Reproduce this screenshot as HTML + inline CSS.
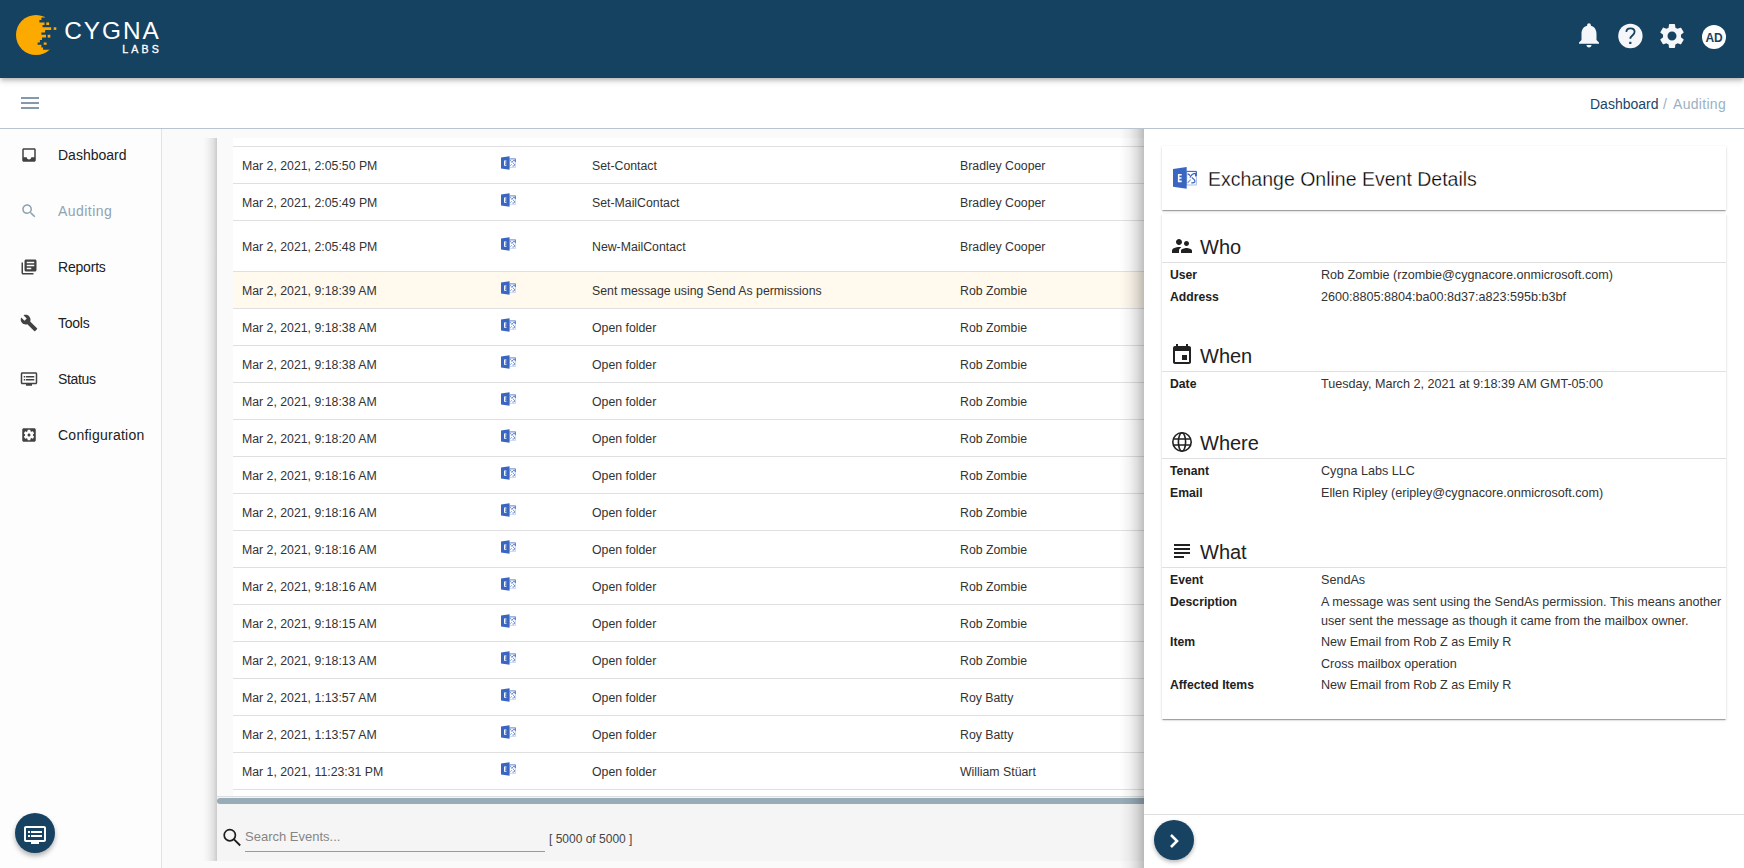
<!DOCTYPE html>
<html><head><meta charset="utf-8"><style>
*{box-sizing:border-box}
html,body{margin:0;padding:0;width:1744px;height:868px;overflow:hidden;background:#fff;font-family:"Liberation Sans",sans-serif;position:relative}
.abs{position:absolute}
#hdr{position:absolute;left:0;top:0;width:1744px;height:78px;background:#164261;box-shadow:0 2px 4px -1px rgba(0,0,0,.22),0 4px 5px 0 rgba(0,0,0,.1),0 1px 10px 0 rgba(0,0,0,.07);z-index:5}
#sub{position:absolute;left:0;top:78px;width:1744px;height:51px;background:#fff;border-bottom:1px solid #b8c5cf;z-index:4}
#side{position:absolute;left:0;top:129px;width:162px;height:739px;background:#fdfdfd;border-right:1px solid #e2e2e2}
#main{position:absolute;left:162px;top:129px;width:982px;height:739px;background:#fafafa;overflow:hidden}
.nav{position:absolute;left:58px;font-size:14px;line-height:18px;white-space:nowrap}
#tbl{position:absolute;left:217px;top:138px;width:1000px;height:723px;background:#fafafa}
#tsh{position:absolute;left:203px;top:138px;width:14px;height:723px;background:linear-gradient(to right,rgba(0,0,0,0),rgba(0,0,0,.03) 35%,rgba(0,0,0,.1) 75%,rgba(0,0,0,.19))}
.row{position:absolute;left:233px;width:1000px;border-top:1px solid #e0e0e0}
.cell{position:absolute;font-size:12.3px;line-height:16px;color:#333;white-space:nowrap}
#panel{position:absolute;left:1144px;top:129px;width:600px;height:739px;background:#fff;z-index:3}
#psh{position:absolute;left:1120px;top:129px;width:24px;height:739px;z-index:3;background:linear-gradient(to right,rgba(0,0,0,0),rgba(0,0,0,.05) 40%,rgba(0,0,0,.13) 70%,rgba(0,0,0,.25))}
.card{position:absolute;left:1162px;width:564px;background:#fff;box-shadow:0 2px 1px -1px rgba(0,0,0,.2),0 1px 1px 0 rgba(0,0,0,.14),0 1px 3px 0 rgba(0,0,0,.12)}
.title{position:absolute;font-size:19.5px;line-height:26px;color:#000;white-space:nowrap;-webkit-text-stroke:.3px #fff}
.hline{position:absolute;left:1162px;width:564px;height:1px;background:#e0e0e0}
.sec{position:absolute;left:1200px;font-size:20px;line-height:24px;color:#212121}
.dl{position:absolute;left:1170px;font-size:12.2px;line-height:22px;padding-top:1px;font-weight:bold;color:#212121;white-space:nowrap}
.dv{position:absolute;left:1321px;font-size:12.6px;line-height:22px;padding-top:1px;color:#333}
</style></head><body>
<div id="hdr"><svg width="150" height="70" viewBox="0 0 150 70" style="position:absolute;left:0;top:0">
<defs><clipPath id="cl"><path d="M0 0H45.1V17.5H41.4V20.1H39.4V22.4H44.5V25H42.5V27.3H51.2V29.9H45.1V32.5H41.4V34.8H46V37.6H42V39.9H39.9V42.5H37.6V44.8H41.4V47.4H43.1V49.7H60V60H0Z"/></clipPath></defs>
<circle cx="36" cy="35" r="20" fill="#fcaa00" clip-path="url(#cl)"/>
<rect x="46.3" y="22.4" width="2.8" height="2.6" fill="#fcaa00"/>
<rect x="53.7" y="27.3" width="2.6" height="2.6" fill="#fcaa00"/>
<rect x="47.7" y="34.8" width="2.6" height="2.8" fill="#fcaa00"/>
<rect x="43.7" y="42.5" width="2.9" height="2.3" fill="#fcaa00"/>
</svg>
<svg width="170" height="60" style="position:absolute;left:0;top:0">
<text x="64.3" y="39.4" font-family="Liberation Sans" font-size="24.4" fill="#fff" textLength="94.5" lengthAdjust="spacing">CYGNA</text>
<text x="122.2" y="53" font-family="Liberation Sans" font-size="10.6" fill="#fff" stroke="#fff" stroke-width=".35" textLength="36.6" lengthAdjust="spacing">LABS</text>
</svg>
<svg width="30" height="30" viewBox="0 0 24 24" style="position:absolute;left:1574px;top:20px"><path d="M12 22c1.1 0 2-.9 2-2h-4c0 1.1.89 2 2 2zm6-6v-5c0-3.07-1.64-5.64-4.5-6.32V4c0-.83-.67-1.5-1.5-1.5s-1.5.67-1.5 1.5v.68C7.63 5.36 6 7.92 6 11v5l-2 2v1h16v-1l-2-2z" fill="#f4f6f9"/></svg>
<svg width="40" height="40" style="position:absolute;left:1610px;top:16px"><circle cx="20.4" cy="20" r="12.2" fill="#f4f6f9"/><path d="M16.3 15.9Q16.6 12.3 20.3 12.3Q24.6 12.3 24.6 15.8Q24.6 17.6 22.6 19.2Q20.3 21 20.3 22.8" fill="none" stroke="#164261" stroke-width="1.8"/><rect x="19.2" y="25.8" width="2.2" height="2.2" fill="#164261"/></svg>
<svg width="30" height="30" viewBox="0 0 24 24" style="position:absolute;left:1657px;top:21px"><path d="M19.14 12.94c.04-.3.06-.61.06-.94 0-.32-.02-.64-.07-.94l2.03-1.58c.18-.14.23-.41.12-.61l-1.92-3.32c-.12-.22-.37-.29-.59-.22l-2.39.96c-.5-.38-1.03-.7-1.62-.94l-.36-2.54c-.04-.24-.24-.41-.48-.41h-3.84c-.24 0-.43.17-.47.41l-.36 2.54c-.59.24-1.13.57-1.62.94l-2.39-.96c-.22-.08-.47 0-.59.22L2.74 8.87c-.12.21-.08.47.12.61l2.03 1.58c-.05.3-.09.63-.09.94s.02.64.07.94l-2.03 1.58c-.18.14-.23.41-.12.61l1.92 3.32c.12.22.37.29.59.22l2.39-.96c.5.38 1.03.7 1.62.94l.36 2.54c.05.24.24.41.48.41h3.84c.24 0 .44-.17.47-.41l.36-2.54c.59-.24 1.13-.56 1.62-.94l2.39.96c.22.08.47 0 .59-.22l1.92-3.32c.12-.22.07-.47-.12-.61l-2.01-1.58zM12 15.6c-1.98 0-3.6-1.62-3.6-3.6s1.62-3.6 3.6-3.6 3.6 1.62 3.6 3.6-1.62 3.6-3.6 3.6z" fill="#f4f6f9"/></svg>
<div class="abs" style="left:1702px;top:25px;width:24px;height:24px;border-radius:50%;background:#fff;color:#174262;font-weight:bold;font-size:12px;line-height:26px;text-align:center;letter-spacing:-.2px">AD</div>
</div>
<div id="sub">
<div class="abs" style="left:21px;top:19px;width:18px;height:2px;background:#8499ab"></div>
<div class="abs" style="left:21px;top:24px;width:18px;height:2px;background:#8499ab"></div>
<div class="abs" style="left:21px;top:29px;width:18px;height:2px;background:#8499ab"></div>
<div class="abs" style="left:1590px;top:17px;font-size:14px;line-height:18px;white-space:nowrap;color:#1b4567">Dashboard</div><div class="abs" style="left:1663px;top:17px;font-size:14px;line-height:18px;color:#9bb0c4">/</div><div class="abs" style="left:1673px;top:17px;font-size:14px;line-height:18px;white-space:nowrap;letter-spacing:.3px;color:#9bb0c4">Auditing</div>
</div>
<div id="side"></div>
<svg width="18" height="18" viewBox="0 0 24 24" style="position:absolute;left:20px;top:146px"><path d="M19 3H4.99c-1.11 0-1.98.89-1.98 2L3 19c0 1.1.88 2 1.99 2H19c1.1 0 2-.9 2-2V5c0-1.11-.9-2-2-2zm0 12h-4c0 1.66-1.35 3-3 3s-3-1.34-3-3H4.99V5H19v10z" fill="#424242"/></svg>
<div class="nav" style="top:146px;color:#212121;letter-spacing:0px">Dashboard</div>
<svg width="18" height="18" viewBox="0 0 24 24" style="position:absolute;left:20px;top:202px"><path d="M15.5 14h-.79l-.28-.27C15.41 12.59 16 11.11 16 9.5 16 5.91 13.09 3 9.5 3S3 5.91 3 9.5 5.91 16 9.5 16c1.61 0 3.09-.59 4.23-1.57l.27.28v.79l5 4.99L20.49 19l-4.99-5zm-6 0C7.01 14 5 11.99 5 9.5S7.01 5 9.5 5 14 7.01 14 9.5 11.99 14 9.5 14z" fill="#8fa3b3"/></svg>
<div class="nav" style="top:202px;color:#8fa3b3;letter-spacing:0.45px">Auditing</div>
<svg width="18" height="18" viewBox="0 0 24 24" style="position:absolute;left:20px;top:258px"><path d="M4 6H2v14c0 1.1.9 2 2 2h14v-2H4V6zm16-4H8c-1.1 0-2 .9-2 2v12c0 1.1.9 2 2 2h12c1.1 0 2-.9 2-2V4c0-1.1-.9-2-2-2zm-1 9H9V9h10v2zm-4 4H9v-2h6v2zm4-8H9V5h10v2z" fill="#424242"/></svg>
<div class="nav" style="top:258px;color:#212121;letter-spacing:-0.2px">Reports</div>
<svg width="18" height="18" viewBox="0 0 24 24" style="position:absolute;left:20px;top:314px"><path d="M22.7 19l-9.1-9.1c.9-2.3.4-5-1.5-6.9-2-2-5-2.4-7.4-1.3L9 6 6 9 1.6 4.7C.4 7.1.9 10.1 2.9 12.1c1.9 1.9 4.6 2.4 6.9 1.5l9.1 9.1c.4.4 1 .4 1.4 0l2.3-2.3c.5-.4.5-1.1.1-1.4z" fill="#424242"/></svg>
<div class="nav" style="top:314px;color:#212121;letter-spacing:-0.25px">Tools</div>
<svg width="18" height="18" viewBox="0 0 24 24" style="position:absolute;left:20px;top:370px"><path d="M21 3H3c-1.1 0-2 .9-2 2v12c0 1.1.9 2 2 2h5v2h8v-2h5c1.1 0 1.99-.9 1.99-2L23 5c0-1.1-.9-2-2-2zm0 14H3V5h18v12zm-2-9H8v2h11V8zm0 4H8v2h11v-2zM7 8H5v2h2V8zm0 4H5v2h2v-2z" fill="#424242"/></svg>
<div class="nav" style="top:370px;color:#212121;letter-spacing:-0.35px">Status</div>
<svg width="18" height="18" viewBox="0 0 24 24" style="position:absolute;left:20px;top:426px"><path d="M12 10c-1.1 0-2 .9-2 2s.9 2 2 2 2-.9 2-2-.9-2-2-2zm7-7H5c-1.11 0-2 .9-2 2v14c0 1.1.89 2 2 2h14c1.11 0 2-.9 2-2V5c0-1.1-.89-2-2-2zm-1.75 9c0 .23-.02.46-.05.68l1.48 1.16c.13.11.17.3.08.45l-1.4 2.42c-.09.15-.27.21-.43.15l-1.74-.7c-.36.28-.76.51-1.18.69l-.26 1.85c-.03.17-.18.3-.35.3h-2.8c-.17 0-.32-.13-.35-.29l-.26-1.85c-.43-.18-.82-.41-1.18-.69l-1.74.7c-.16.06-.34 0-.43-.15l-1.4-2.42c-.09-.15-.05-.34.08-.45l1.48-1.16c-.03-.23-.05-.46-.05-.69 0-.23.02-.46.05-.68l-1.48-1.16c-.13-.11-.17-.3-.08-.45l1.4-2.42c.09-.15.27-.21.43-.15l1.74.7c.36-.28.76-.51 1.18-.69l.26-1.85c.03-.17.18-.3.35-.3h2.8c.17 0 .32.13.35.29l.26 1.85c.43.18.82.41 1.18.69l1.74-.7c.16-.06.34 0 .43.15l1.4 2.42c.09.15.05.34-.08.45l-1.48 1.16c.03.23.05.46.05.69z" fill="#424242"/></svg>
<div class="nav" style="top:426px;color:#212121;letter-spacing:0.25px">Configuration</div>
<div id="main"></div>
<div id="tbl"></div><div id="tsh"></div>
<div class="abs" style="left:233px;top:138px;width:1000px;height:658px;background:#fff"></div>
<div class="row" style="top:146px;height:37px;background:#fff"></div>
<div class="cell" style="left:242px;top:157.5px">Mar 2, 2021, 2:05:50 PM</div>
<svg width="15" height="14" viewBox="0 0 24 22" style="position:absolute;left:501px;top:156px">
<path d="M13.7 4.4H23.4V18H13.7Z" fill="#fff" stroke="#a9bde6" stroke-width="1"/>
<path d="M13.7 4.4H23.4V9" fill="none" stroke="#3a66c2" stroke-width="1"/>
<g fill="none" stroke="#3a66c2" stroke-width="1.2">
<path d="M14.6 6.9Q16.4 7.3 16.9 8.8"/>
<path d="M17 10.6Q18.6 6.4 22.6 6.4V9.6"/>
<path d="M18.8 10.4L21.6 13Q22.9 15.9 19.4 15.9H18.3"/>
<path d="M17.6 12.6L14.6 15.8" stroke="#7f9bd8"/>
</g>
<path d="M0 2.1L13.7 0V21.8L0 19.8Z" fill="#3a66c2"/>
<path d="M4.9 6.9H8.7V8.5H6.4V10.2H8.5V11.7H6.4V13.6H8.7V15.2H4.9Z" fill="#fff"/>
</svg>
<div class="cell" style="left:592px;top:157.5px">Set-Contact</div>
<div class="cell" style="left:960px;top:157.5px">Bradley Cooper</div>
<div class="row" style="top:183px;height:37px;background:#fff"></div>
<div class="cell" style="left:242px;top:194.5px">Mar 2, 2021, 2:05:49 PM</div>
<svg width="15" height="14" viewBox="0 0 24 22" style="position:absolute;left:501px;top:193px">
<path d="M13.7 4.4H23.4V18H13.7Z" fill="#fff" stroke="#a9bde6" stroke-width="1"/>
<path d="M13.7 4.4H23.4V9" fill="none" stroke="#3a66c2" stroke-width="1"/>
<g fill="none" stroke="#3a66c2" stroke-width="1.2">
<path d="M14.6 6.9Q16.4 7.3 16.9 8.8"/>
<path d="M17 10.6Q18.6 6.4 22.6 6.4V9.6"/>
<path d="M18.8 10.4L21.6 13Q22.9 15.9 19.4 15.9H18.3"/>
<path d="M17.6 12.6L14.6 15.8" stroke="#7f9bd8"/>
</g>
<path d="M0 2.1L13.7 0V21.8L0 19.8Z" fill="#3a66c2"/>
<path d="M4.9 6.9H8.7V8.5H6.4V10.2H8.5V11.7H6.4V13.6H8.7V15.2H4.9Z" fill="#fff"/>
</svg>
<div class="cell" style="left:592px;top:194.5px">Set-MailContact</div>
<div class="cell" style="left:960px;top:194.5px">Bradley Cooper</div>
<div class="row" style="top:220px;height:51px;background:#fff"></div>
<div class="cell" style="left:242px;top:238.5px">Mar 2, 2021, 2:05:48 PM</div>
<svg width="15" height="14" viewBox="0 0 24 22" style="position:absolute;left:501px;top:237px">
<path d="M13.7 4.4H23.4V18H13.7Z" fill="#fff" stroke="#a9bde6" stroke-width="1"/>
<path d="M13.7 4.4H23.4V9" fill="none" stroke="#3a66c2" stroke-width="1"/>
<g fill="none" stroke="#3a66c2" stroke-width="1.2">
<path d="M14.6 6.9Q16.4 7.3 16.9 8.8"/>
<path d="M17 10.6Q18.6 6.4 22.6 6.4V9.6"/>
<path d="M18.8 10.4L21.6 13Q22.9 15.9 19.4 15.9H18.3"/>
<path d="M17.6 12.6L14.6 15.8" stroke="#7f9bd8"/>
</g>
<path d="M0 2.1L13.7 0V21.8L0 19.8Z" fill="#3a66c2"/>
<path d="M4.9 6.9H8.7V8.5H6.4V10.2H8.5V11.7H6.4V13.6H8.7V15.2H4.9Z" fill="#fff"/>
</svg>
<div class="cell" style="left:592px;top:238.5px">New-MailContact</div>
<div class="cell" style="left:960px;top:238.5px">Bradley Cooper</div>
<div class="row" style="top:271px;height:37px;background:#fff9ee"></div>
<div class="cell" style="left:242px;top:282.5px">Mar 2, 2021, 9:18:39 AM</div>
<svg width="15" height="14" viewBox="0 0 24 22" style="position:absolute;left:501px;top:281px">
<path d="M13.7 4.4H23.4V18H13.7Z" fill="#fff" stroke="#a9bde6" stroke-width="1"/>
<path d="M13.7 4.4H23.4V9" fill="none" stroke="#3a66c2" stroke-width="1"/>
<g fill="none" stroke="#3a66c2" stroke-width="1.2">
<path d="M14.6 6.9Q16.4 7.3 16.9 8.8"/>
<path d="M17 10.6Q18.6 6.4 22.6 6.4V9.6"/>
<path d="M18.8 10.4L21.6 13Q22.9 15.9 19.4 15.9H18.3"/>
<path d="M17.6 12.6L14.6 15.8" stroke="#7f9bd8"/>
</g>
<path d="M0 2.1L13.7 0V21.8L0 19.8Z" fill="#3a66c2"/>
<path d="M4.9 6.9H8.7V8.5H6.4V10.2H8.5V11.7H6.4V13.6H8.7V15.2H4.9Z" fill="#fff"/>
</svg>
<div class="cell" style="left:592px;top:282.5px">Sent message using Send As permissions</div>
<div class="cell" style="left:960px;top:282.5px">Rob Zombie</div>
<div class="row" style="top:308px;height:37px;background:#fff"></div>
<div class="cell" style="left:242px;top:319.5px">Mar 2, 2021, 9:18:38 AM</div>
<svg width="15" height="14" viewBox="0 0 24 22" style="position:absolute;left:501px;top:318px">
<path d="M13.7 4.4H23.4V18H13.7Z" fill="#fff" stroke="#a9bde6" stroke-width="1"/>
<path d="M13.7 4.4H23.4V9" fill="none" stroke="#3a66c2" stroke-width="1"/>
<g fill="none" stroke="#3a66c2" stroke-width="1.2">
<path d="M14.6 6.9Q16.4 7.3 16.9 8.8"/>
<path d="M17 10.6Q18.6 6.4 22.6 6.4V9.6"/>
<path d="M18.8 10.4L21.6 13Q22.9 15.9 19.4 15.9H18.3"/>
<path d="M17.6 12.6L14.6 15.8" stroke="#7f9bd8"/>
</g>
<path d="M0 2.1L13.7 0V21.8L0 19.8Z" fill="#3a66c2"/>
<path d="M4.9 6.9H8.7V8.5H6.4V10.2H8.5V11.7H6.4V13.6H8.7V15.2H4.9Z" fill="#fff"/>
</svg>
<div class="cell" style="left:592px;top:319.5px">Open folder</div>
<div class="cell" style="left:960px;top:319.5px">Rob Zombie</div>
<div class="row" style="top:345px;height:37px;background:#fff"></div>
<div class="cell" style="left:242px;top:356.5px">Mar 2, 2021, 9:18:38 AM</div>
<svg width="15" height="14" viewBox="0 0 24 22" style="position:absolute;left:501px;top:355px">
<path d="M13.7 4.4H23.4V18H13.7Z" fill="#fff" stroke="#a9bde6" stroke-width="1"/>
<path d="M13.7 4.4H23.4V9" fill="none" stroke="#3a66c2" stroke-width="1"/>
<g fill="none" stroke="#3a66c2" stroke-width="1.2">
<path d="M14.6 6.9Q16.4 7.3 16.9 8.8"/>
<path d="M17 10.6Q18.6 6.4 22.6 6.4V9.6"/>
<path d="M18.8 10.4L21.6 13Q22.9 15.9 19.4 15.9H18.3"/>
<path d="M17.6 12.6L14.6 15.8" stroke="#7f9bd8"/>
</g>
<path d="M0 2.1L13.7 0V21.8L0 19.8Z" fill="#3a66c2"/>
<path d="M4.9 6.9H8.7V8.5H6.4V10.2H8.5V11.7H6.4V13.6H8.7V15.2H4.9Z" fill="#fff"/>
</svg>
<div class="cell" style="left:592px;top:356.5px">Open folder</div>
<div class="cell" style="left:960px;top:356.5px">Rob Zombie</div>
<div class="row" style="top:382px;height:37px;background:#fff"></div>
<div class="cell" style="left:242px;top:393.5px">Mar 2, 2021, 9:18:38 AM</div>
<svg width="15" height="14" viewBox="0 0 24 22" style="position:absolute;left:501px;top:392px">
<path d="M13.7 4.4H23.4V18H13.7Z" fill="#fff" stroke="#a9bde6" stroke-width="1"/>
<path d="M13.7 4.4H23.4V9" fill="none" stroke="#3a66c2" stroke-width="1"/>
<g fill="none" stroke="#3a66c2" stroke-width="1.2">
<path d="M14.6 6.9Q16.4 7.3 16.9 8.8"/>
<path d="M17 10.6Q18.6 6.4 22.6 6.4V9.6"/>
<path d="M18.8 10.4L21.6 13Q22.9 15.9 19.4 15.9H18.3"/>
<path d="M17.6 12.6L14.6 15.8" stroke="#7f9bd8"/>
</g>
<path d="M0 2.1L13.7 0V21.8L0 19.8Z" fill="#3a66c2"/>
<path d="M4.9 6.9H8.7V8.5H6.4V10.2H8.5V11.7H6.4V13.6H8.7V15.2H4.9Z" fill="#fff"/>
</svg>
<div class="cell" style="left:592px;top:393.5px">Open folder</div>
<div class="cell" style="left:960px;top:393.5px">Rob Zombie</div>
<div class="row" style="top:419px;height:37px;background:#fff"></div>
<div class="cell" style="left:242px;top:430.5px">Mar 2, 2021, 9:18:20 AM</div>
<svg width="15" height="14" viewBox="0 0 24 22" style="position:absolute;left:501px;top:429px">
<path d="M13.7 4.4H23.4V18H13.7Z" fill="#fff" stroke="#a9bde6" stroke-width="1"/>
<path d="M13.7 4.4H23.4V9" fill="none" stroke="#3a66c2" stroke-width="1"/>
<g fill="none" stroke="#3a66c2" stroke-width="1.2">
<path d="M14.6 6.9Q16.4 7.3 16.9 8.8"/>
<path d="M17 10.6Q18.6 6.4 22.6 6.4V9.6"/>
<path d="M18.8 10.4L21.6 13Q22.9 15.9 19.4 15.9H18.3"/>
<path d="M17.6 12.6L14.6 15.8" stroke="#7f9bd8"/>
</g>
<path d="M0 2.1L13.7 0V21.8L0 19.8Z" fill="#3a66c2"/>
<path d="M4.9 6.9H8.7V8.5H6.4V10.2H8.5V11.7H6.4V13.6H8.7V15.2H4.9Z" fill="#fff"/>
</svg>
<div class="cell" style="left:592px;top:430.5px">Open folder</div>
<div class="cell" style="left:960px;top:430.5px">Rob Zombie</div>
<div class="row" style="top:456px;height:37px;background:#fff"></div>
<div class="cell" style="left:242px;top:467.5px">Mar 2, 2021, 9:18:16 AM</div>
<svg width="15" height="14" viewBox="0 0 24 22" style="position:absolute;left:501px;top:466px">
<path d="M13.7 4.4H23.4V18H13.7Z" fill="#fff" stroke="#a9bde6" stroke-width="1"/>
<path d="M13.7 4.4H23.4V9" fill="none" stroke="#3a66c2" stroke-width="1"/>
<g fill="none" stroke="#3a66c2" stroke-width="1.2">
<path d="M14.6 6.9Q16.4 7.3 16.9 8.8"/>
<path d="M17 10.6Q18.6 6.4 22.6 6.4V9.6"/>
<path d="M18.8 10.4L21.6 13Q22.9 15.9 19.4 15.9H18.3"/>
<path d="M17.6 12.6L14.6 15.8" stroke="#7f9bd8"/>
</g>
<path d="M0 2.1L13.7 0V21.8L0 19.8Z" fill="#3a66c2"/>
<path d="M4.9 6.9H8.7V8.5H6.4V10.2H8.5V11.7H6.4V13.6H8.7V15.2H4.9Z" fill="#fff"/>
</svg>
<div class="cell" style="left:592px;top:467.5px">Open folder</div>
<div class="cell" style="left:960px;top:467.5px">Rob Zombie</div>
<div class="row" style="top:493px;height:37px;background:#fff"></div>
<div class="cell" style="left:242px;top:504.5px">Mar 2, 2021, 9:18:16 AM</div>
<svg width="15" height="14" viewBox="0 0 24 22" style="position:absolute;left:501px;top:503px">
<path d="M13.7 4.4H23.4V18H13.7Z" fill="#fff" stroke="#a9bde6" stroke-width="1"/>
<path d="M13.7 4.4H23.4V9" fill="none" stroke="#3a66c2" stroke-width="1"/>
<g fill="none" stroke="#3a66c2" stroke-width="1.2">
<path d="M14.6 6.9Q16.4 7.3 16.9 8.8"/>
<path d="M17 10.6Q18.6 6.4 22.6 6.4V9.6"/>
<path d="M18.8 10.4L21.6 13Q22.9 15.9 19.4 15.9H18.3"/>
<path d="M17.6 12.6L14.6 15.8" stroke="#7f9bd8"/>
</g>
<path d="M0 2.1L13.7 0V21.8L0 19.8Z" fill="#3a66c2"/>
<path d="M4.9 6.9H8.7V8.5H6.4V10.2H8.5V11.7H6.4V13.6H8.7V15.2H4.9Z" fill="#fff"/>
</svg>
<div class="cell" style="left:592px;top:504.5px">Open folder</div>
<div class="cell" style="left:960px;top:504.5px">Rob Zombie</div>
<div class="row" style="top:530px;height:37px;background:#fff"></div>
<div class="cell" style="left:242px;top:541.5px">Mar 2, 2021, 9:18:16 AM</div>
<svg width="15" height="14" viewBox="0 0 24 22" style="position:absolute;left:501px;top:540px">
<path d="M13.7 4.4H23.4V18H13.7Z" fill="#fff" stroke="#a9bde6" stroke-width="1"/>
<path d="M13.7 4.4H23.4V9" fill="none" stroke="#3a66c2" stroke-width="1"/>
<g fill="none" stroke="#3a66c2" stroke-width="1.2">
<path d="M14.6 6.9Q16.4 7.3 16.9 8.8"/>
<path d="M17 10.6Q18.6 6.4 22.6 6.4V9.6"/>
<path d="M18.8 10.4L21.6 13Q22.9 15.9 19.4 15.9H18.3"/>
<path d="M17.6 12.6L14.6 15.8" stroke="#7f9bd8"/>
</g>
<path d="M0 2.1L13.7 0V21.8L0 19.8Z" fill="#3a66c2"/>
<path d="M4.9 6.9H8.7V8.5H6.4V10.2H8.5V11.7H6.4V13.6H8.7V15.2H4.9Z" fill="#fff"/>
</svg>
<div class="cell" style="left:592px;top:541.5px">Open folder</div>
<div class="cell" style="left:960px;top:541.5px">Rob Zombie</div>
<div class="row" style="top:567px;height:37px;background:#fff"></div>
<div class="cell" style="left:242px;top:578.5px">Mar 2, 2021, 9:18:16 AM</div>
<svg width="15" height="14" viewBox="0 0 24 22" style="position:absolute;left:501px;top:577px">
<path d="M13.7 4.4H23.4V18H13.7Z" fill="#fff" stroke="#a9bde6" stroke-width="1"/>
<path d="M13.7 4.4H23.4V9" fill="none" stroke="#3a66c2" stroke-width="1"/>
<g fill="none" stroke="#3a66c2" stroke-width="1.2">
<path d="M14.6 6.9Q16.4 7.3 16.9 8.8"/>
<path d="M17 10.6Q18.6 6.4 22.6 6.4V9.6"/>
<path d="M18.8 10.4L21.6 13Q22.9 15.9 19.4 15.9H18.3"/>
<path d="M17.6 12.6L14.6 15.8" stroke="#7f9bd8"/>
</g>
<path d="M0 2.1L13.7 0V21.8L0 19.8Z" fill="#3a66c2"/>
<path d="M4.9 6.9H8.7V8.5H6.4V10.2H8.5V11.7H6.4V13.6H8.7V15.2H4.9Z" fill="#fff"/>
</svg>
<div class="cell" style="left:592px;top:578.5px">Open folder</div>
<div class="cell" style="left:960px;top:578.5px">Rob Zombie</div>
<div class="row" style="top:604px;height:37px;background:#fff"></div>
<div class="cell" style="left:242px;top:615.5px">Mar 2, 2021, 9:18:15 AM</div>
<svg width="15" height="14" viewBox="0 0 24 22" style="position:absolute;left:501px;top:614px">
<path d="M13.7 4.4H23.4V18H13.7Z" fill="#fff" stroke="#a9bde6" stroke-width="1"/>
<path d="M13.7 4.4H23.4V9" fill="none" stroke="#3a66c2" stroke-width="1"/>
<g fill="none" stroke="#3a66c2" stroke-width="1.2">
<path d="M14.6 6.9Q16.4 7.3 16.9 8.8"/>
<path d="M17 10.6Q18.6 6.4 22.6 6.4V9.6"/>
<path d="M18.8 10.4L21.6 13Q22.9 15.9 19.4 15.9H18.3"/>
<path d="M17.6 12.6L14.6 15.8" stroke="#7f9bd8"/>
</g>
<path d="M0 2.1L13.7 0V21.8L0 19.8Z" fill="#3a66c2"/>
<path d="M4.9 6.9H8.7V8.5H6.4V10.2H8.5V11.7H6.4V13.6H8.7V15.2H4.9Z" fill="#fff"/>
</svg>
<div class="cell" style="left:592px;top:615.5px">Open folder</div>
<div class="cell" style="left:960px;top:615.5px">Rob Zombie</div>
<div class="row" style="top:641px;height:37px;background:#fff"></div>
<div class="cell" style="left:242px;top:652.5px">Mar 2, 2021, 9:18:13 AM</div>
<svg width="15" height="14" viewBox="0 0 24 22" style="position:absolute;left:501px;top:651px">
<path d="M13.7 4.4H23.4V18H13.7Z" fill="#fff" stroke="#a9bde6" stroke-width="1"/>
<path d="M13.7 4.4H23.4V9" fill="none" stroke="#3a66c2" stroke-width="1"/>
<g fill="none" stroke="#3a66c2" stroke-width="1.2">
<path d="M14.6 6.9Q16.4 7.3 16.9 8.8"/>
<path d="M17 10.6Q18.6 6.4 22.6 6.4V9.6"/>
<path d="M18.8 10.4L21.6 13Q22.9 15.9 19.4 15.9H18.3"/>
<path d="M17.6 12.6L14.6 15.8" stroke="#7f9bd8"/>
</g>
<path d="M0 2.1L13.7 0V21.8L0 19.8Z" fill="#3a66c2"/>
<path d="M4.9 6.9H8.7V8.5H6.4V10.2H8.5V11.7H6.4V13.6H8.7V15.2H4.9Z" fill="#fff"/>
</svg>
<div class="cell" style="left:592px;top:652.5px">Open folder</div>
<div class="cell" style="left:960px;top:652.5px">Rob Zombie</div>
<div class="row" style="top:678px;height:37px;background:#fff"></div>
<div class="cell" style="left:242px;top:689.5px">Mar 2, 2021, 1:13:57 AM</div>
<svg width="15" height="14" viewBox="0 0 24 22" style="position:absolute;left:501px;top:688px">
<path d="M13.7 4.4H23.4V18H13.7Z" fill="#fff" stroke="#a9bde6" stroke-width="1"/>
<path d="M13.7 4.4H23.4V9" fill="none" stroke="#3a66c2" stroke-width="1"/>
<g fill="none" stroke="#3a66c2" stroke-width="1.2">
<path d="M14.6 6.9Q16.4 7.3 16.9 8.8"/>
<path d="M17 10.6Q18.6 6.4 22.6 6.4V9.6"/>
<path d="M18.8 10.4L21.6 13Q22.9 15.9 19.4 15.9H18.3"/>
<path d="M17.6 12.6L14.6 15.8" stroke="#7f9bd8"/>
</g>
<path d="M0 2.1L13.7 0V21.8L0 19.8Z" fill="#3a66c2"/>
<path d="M4.9 6.9H8.7V8.5H6.4V10.2H8.5V11.7H6.4V13.6H8.7V15.2H4.9Z" fill="#fff"/>
</svg>
<div class="cell" style="left:592px;top:689.5px">Open folder</div>
<div class="cell" style="left:960px;top:689.5px">Roy Batty</div>
<div class="row" style="top:715px;height:37px;background:#fff"></div>
<div class="cell" style="left:242px;top:726.5px">Mar 2, 2021, 1:13:57 AM</div>
<svg width="15" height="14" viewBox="0 0 24 22" style="position:absolute;left:501px;top:725px">
<path d="M13.7 4.4H23.4V18H13.7Z" fill="#fff" stroke="#a9bde6" stroke-width="1"/>
<path d="M13.7 4.4H23.4V9" fill="none" stroke="#3a66c2" stroke-width="1"/>
<g fill="none" stroke="#3a66c2" stroke-width="1.2">
<path d="M14.6 6.9Q16.4 7.3 16.9 8.8"/>
<path d="M17 10.6Q18.6 6.4 22.6 6.4V9.6"/>
<path d="M18.8 10.4L21.6 13Q22.9 15.9 19.4 15.9H18.3"/>
<path d="M17.6 12.6L14.6 15.8" stroke="#7f9bd8"/>
</g>
<path d="M0 2.1L13.7 0V21.8L0 19.8Z" fill="#3a66c2"/>
<path d="M4.9 6.9H8.7V8.5H6.4V10.2H8.5V11.7H6.4V13.6H8.7V15.2H4.9Z" fill="#fff"/>
</svg>
<div class="cell" style="left:592px;top:726.5px">Open folder</div>
<div class="cell" style="left:960px;top:726.5px">Roy Batty</div>
<div class="row" style="top:752px;height:37px;background:#fff"></div>
<div class="cell" style="left:242px;top:763.5px">Mar 1, 2021, 11:23:31 PM</div>
<svg width="15" height="14" viewBox="0 0 24 22" style="position:absolute;left:501px;top:762px">
<path d="M13.7 4.4H23.4V18H13.7Z" fill="#fff" stroke="#a9bde6" stroke-width="1"/>
<path d="M13.7 4.4H23.4V9" fill="none" stroke="#3a66c2" stroke-width="1"/>
<g fill="none" stroke="#3a66c2" stroke-width="1.2">
<path d="M14.6 6.9Q16.4 7.3 16.9 8.8"/>
<path d="M17 10.6Q18.6 6.4 22.6 6.4V9.6"/>
<path d="M18.8 10.4L21.6 13Q22.9 15.9 19.4 15.9H18.3"/>
<path d="M17.6 12.6L14.6 15.8" stroke="#7f9bd8"/>
</g>
<path d="M0 2.1L13.7 0V21.8L0 19.8Z" fill="#3a66c2"/>
<path d="M4.9 6.9H8.7V8.5H6.4V10.2H8.5V11.7H6.4V13.6H8.7V15.2H4.9Z" fill="#fff"/>
</svg>
<div class="cell" style="left:592px;top:763.5px">Open folder</div>
<div class="cell" style="left:960px;top:763.5px">William Stüart</div>
<div class="row" style="top:789px;height:6px;background:#fff"></div>
<div class="abs" style="left:217px;top:796px;width:1000px;height:1px;background:#dedede"></div>
<div class="abs" style="left:217px;top:797px;width:1000px;height:8px;background:#f4f4f4"></div>
<div class="abs" style="left:217px;top:798px;width:1000px;height:6px;border-radius:3px;background:#97abb8"></div>
<div class="abs" style="left:217px;top:805px;width:1000px;height:56px;background:#f5f5f5"></div>
<svg width="30" height="30" style="position:absolute;left:215px;top:820px"><g fill="none" stroke="#1e1e1e"><circle cx="14.8" cy="15.2" r="5.6" stroke-width="1.7"/><path d="M19 19.4L25.2 25.5" stroke-width="1.9"/></g></svg>
<div class="abs" style="left:245px;top:829px;font-size:13px;line-height:16px;color:#858585">Search Events...</div>
<div class="abs" style="left:245px;top:851px;width:300px;height:1px;background:#9a9a9a"></div>
<div class="abs" style="left:549px;top:831px;font-size:12px;line-height:16px;color:#444;white-space:nowrap">[ 5000 of 5000 ]</div>
<div id="panel"></div><div id="psh"></div>
<div style="position:relative;z-index:6">
<div class="card" style="top:146px;height:64px"></div>
<svg width="24" height="22" viewBox="0 0 24 22" style="position:absolute;left:1173px;top:167px">
<path d="M13.7 4.4H23.4V18H13.7Z" fill="#fff" stroke="#a9bde6" stroke-width="1"/>
<path d="M13.7 4.4H23.4V9" fill="none" stroke="#3a66c2" stroke-width="1"/>
<g fill="none" stroke="#3a66c2" stroke-width="1.2">
<path d="M14.6 6.9Q16.4 7.3 16.9 8.8"/>
<path d="M17 10.6Q18.6 6.4 22.6 6.4V9.6"/>
<path d="M18.8 10.4L21.6 13Q22.9 15.9 19.4 15.9H18.3"/>
<path d="M17.6 12.6L14.6 15.8" stroke="#7f9bd8"/>
</g>
<path d="M0 2.1L13.7 0V21.8L0 19.8Z" fill="#3a66c2"/>
<path d="M4.9 6.9H8.7V8.5H6.4V10.2H8.5V11.7H6.4V13.6H8.7V15.2H4.9Z" fill="#fff"/>
</svg>
<div class="title" style="left:1208px;top:166px">Exchange Online Event Details</div>
<div class="card" style="top:214px;height:505px"></div>
<div class="hline" style="top:262px"></div>
<svg width="24" height="24" viewBox="0 0 24 24" style="position:absolute;left:1170px;top:234px"><path d="M16.5 12c1.38 0 2.49-1.12 2.49-2.5S17.88 7 16.5 7C15.12 7 14 8.12 14 9.5s1.12 2.5 2.5 2.5zM9 11c1.66 0 2.99-1.34 2.99-3S10.66 5 9 5C7.34 5 6 6.34 6 8s1.34 3 3 3zm7.5 3c-1.83 0-5.5.92-5.5 2.75V19h11v-2.25c0-1.83-3.67-2.75-5.5-2.75zM9 13c-2.33 0-7 1.17-7 3.5V19h7v-2.25c0-.85.33-2.34 2.37-3.47C10.5 13.1 9.66 13 9 13z" fill="#212121"/></svg>
<div class="sec" style="top:235px">Who</div>
<div class="dl" style="top:263px">User</div><div class="dv" style="top:263px;">Rob Zombie (rzombie@cygnacore.onmicrosoft.com)</div>
<div class="dl" style="top:285px">Address</div><div class="dv" style="top:285px;">2600:8805:8804:ba00:8d37:a823:595b:b3bf</div>
<div class="hline" style="top:371px"></div>
<svg width="24" height="24" viewBox="0 0 24 24" style="position:absolute;left:1170px;top:343px"><path d="M17 12h-5v5h5v-5zM16 1v2H8V1H6v2H5c-1.11 0-1.99.9-1.99 2L3 19c0 1.1.89 2 2 2h14c1.1 0 2-.9 2-2V5c0-1.1-.9-2-2-2h-1V1h-2zm3 18H5V8h14v11z" fill="#212121"/></svg>
<div class="sec" style="top:344px">When</div>
<div class="dl" style="top:372px">Date</div><div class="dv" style="top:372px;">Tuesday, March 2, 2021 at 9:18:39 AM GMT-05:00</div>
<div class="hline" style="top:458px"></div>
<svg width="24" height="24" viewBox="0 0 24 24" style="position:absolute;left:1170px;top:430px"><g fill="none" stroke="#212121" stroke-width="1.6"><circle cx="12" cy="12" r="9.2"/><ellipse cx="12" cy="12" rx="3.6" ry="9.2"/><path d="M3 9H21M3 15H21"/></g></svg>
<div class="sec" style="top:431px">Where</div>
<div class="dl" style="top:459px">Tenant</div><div class="dv" style="top:459px;">Cygna Labs LLC</div>
<div class="dl" style="top:481px">Email</div><div class="dv" style="top:481px;">Ellen Ripley (eripley@cygnacore.onmicrosoft.com)</div>
<div class="hline" style="top:567px"></div>
<svg width="24" height="24" viewBox="0 0 24 24" style="position:absolute;left:1170px;top:539px"><path d="M14 17H4v2h10v-2zm6-8H4v2h16V9zM4 15h16v-2H4v2zM4 5v2h16V5H4z" fill="#212121"/></svg>
<div class="sec" style="top:540px">What</div>
<div class="dl" style="top:568px">Event</div><div class="dv" style="top:568px;">SendAs</div>
<div class="dl" style="top:590px">Description</div><div class="dv" style="top:592px;white-space:nowrap;line-height:19px">A message was sent using the SendAs permission. This means another<br>user sent the message as though it came from the mailbox owner.</div>
<div class="dl" style="top:630px">Item</div><div class="dv" style="top:630px;">New Email from Rob Z as Emily R</div>
<div class="dl" style="top:652px"></div><div class="dv" style="top:652px;">Cross mailbox operation</div>
<div class="dl" style="top:673px">Affected Items</div><div class="dv" style="top:673px;">New Email from Rob Z as Emily R</div>
<div class="abs" style="left:1144px;top:814px;width:600px;height:1px;background:#e0e0e0"></div>
<div class="abs" style="left:1154px;top:820px;width:40px;height:40px;border-radius:50%;background:#174262;box-shadow:0 2px 4px rgba(0,0,0,.3)"></div>
<svg width="40" height="40" style="position:absolute;left:1154px;top:820px"><path d="M17 15L23 21L17 27" fill="none" stroke="#fff" stroke-width="2.6"/></svg>
</div>
<div class="abs" style="left:15px;top:813px;width:40px;height:40px;border-radius:50%;background:#174262;box-shadow:0 3px 5px rgba(0,0,0,.3)"></div>
<svg width="24" height="24" viewBox="0 0 24 24" style="position:absolute;left:23px;top:823px"><path d="M21 3H3c-1.1 0-2 .9-2 2v12c0 1.1.9 2 2 2h5v2h8v-2h5c1.1 0 1.99-.9 1.99-2L23 5c0-1.1-.9-2-2-2zm0 14H3V5h18v12zm-2-9H8v2h11V8zm0 4H8v2h11v-2zM7 8H5v2h2V8zm0 4H5v2h2v-2z" fill="#fff"/></svg>
</body></html>
